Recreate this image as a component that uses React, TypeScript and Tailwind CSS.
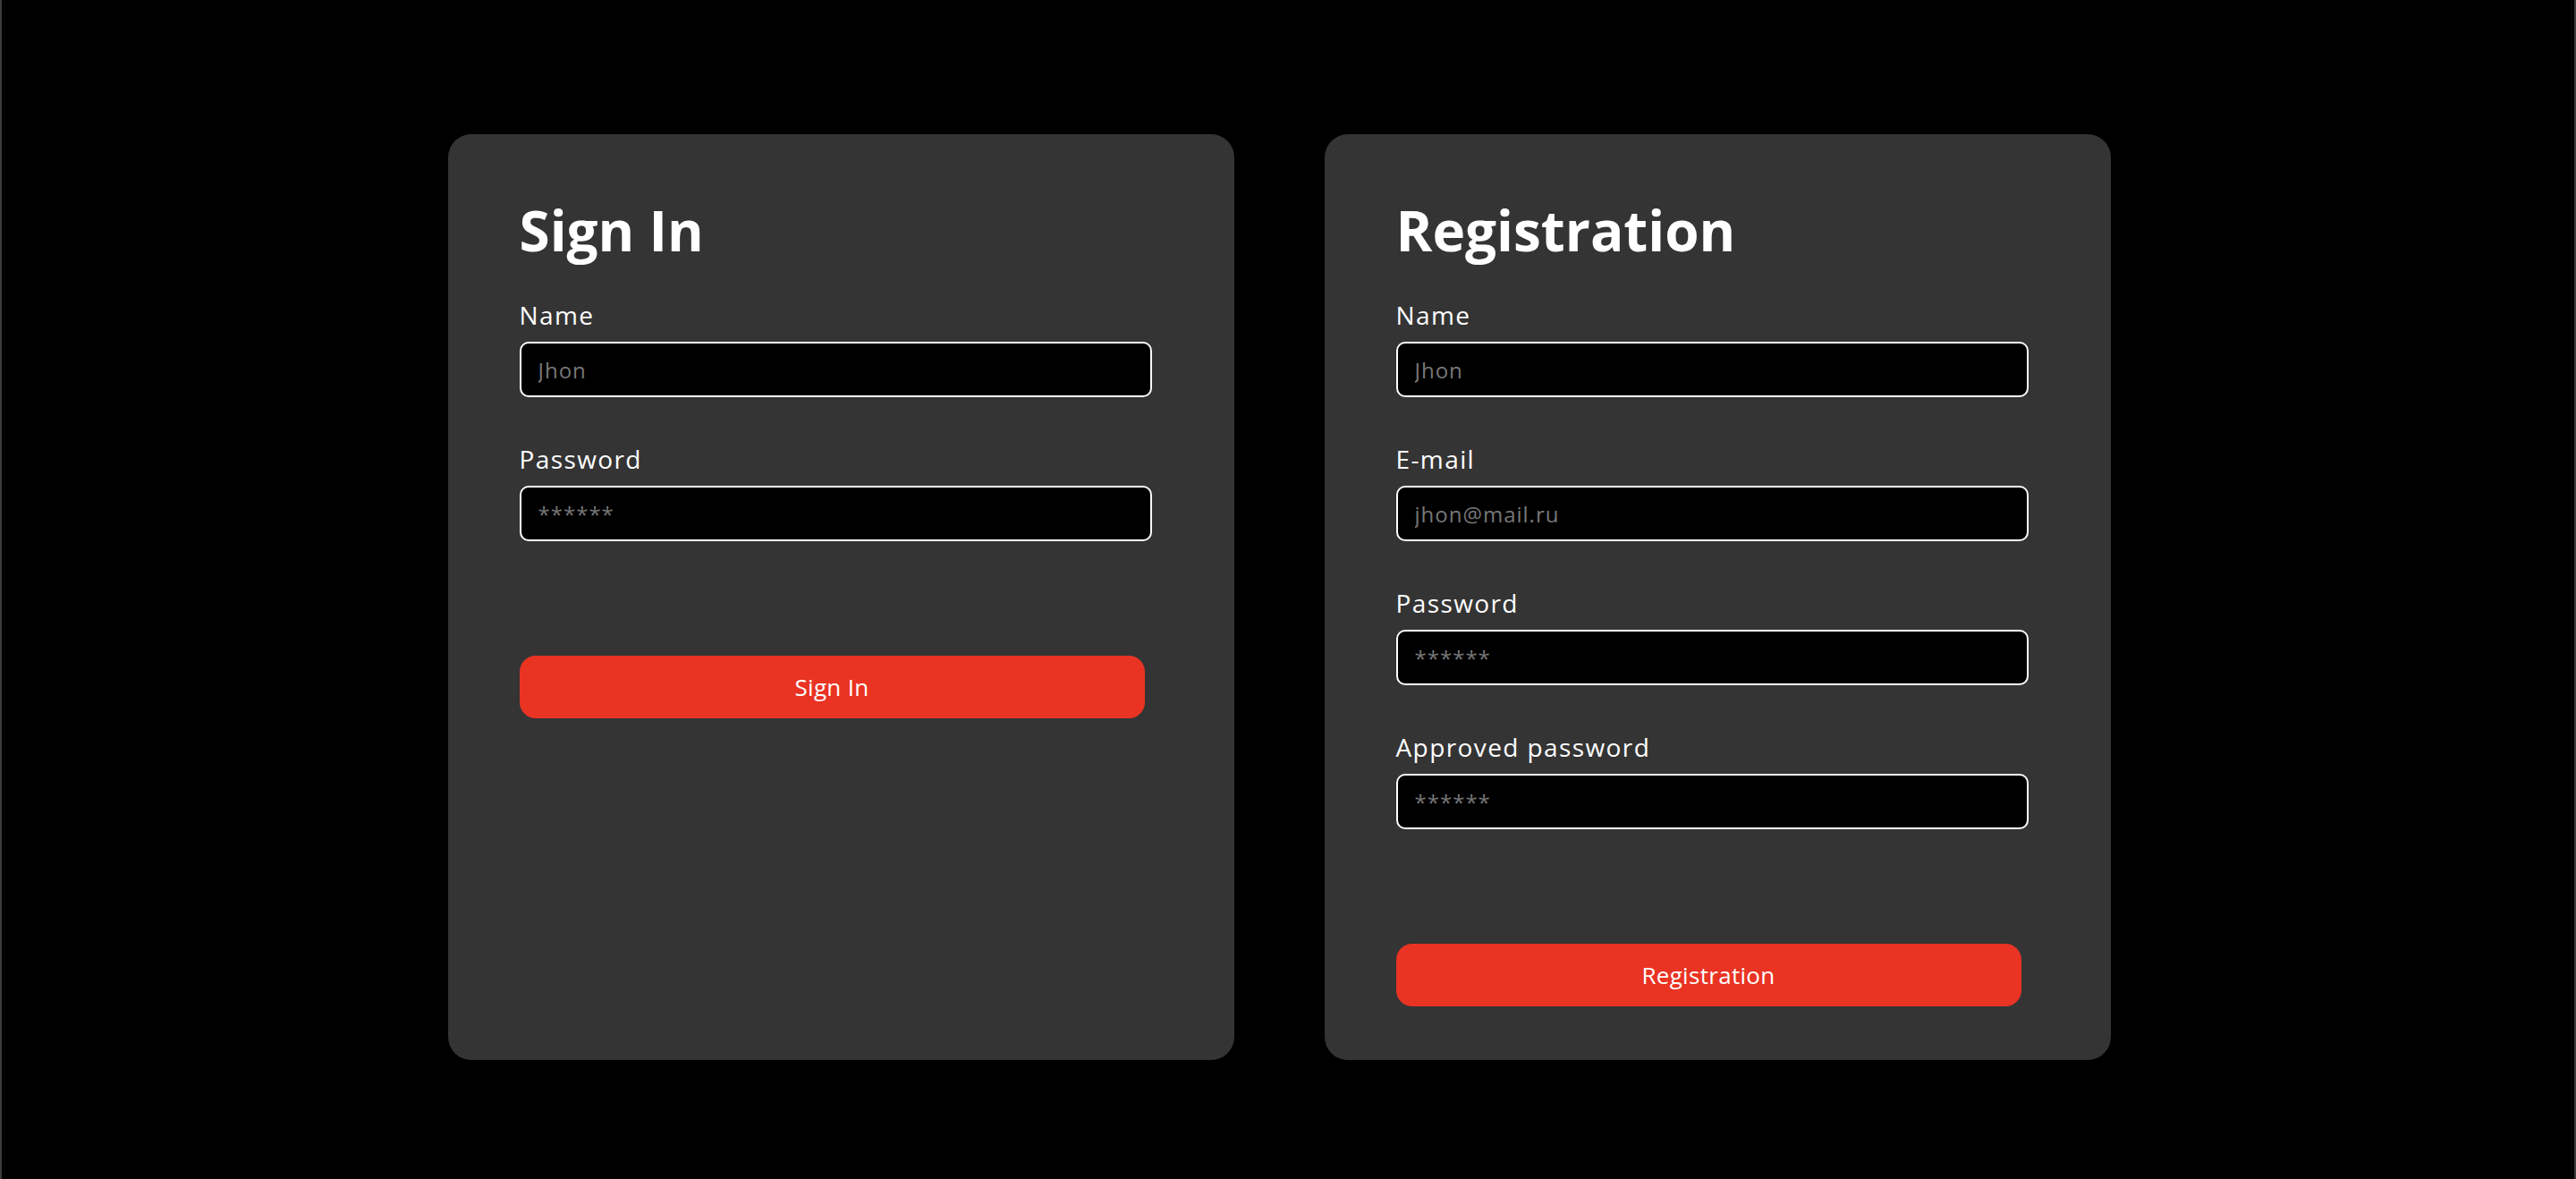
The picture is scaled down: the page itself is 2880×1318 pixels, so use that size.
import React, { useState } from 'react';

interface FieldProps {
    label: string;
    type: string;
    placeholder: string;
    value: string;
    onChange: (v: string) => void;
}

const Field: React.FC<FieldProps> = ({ label, type, placeholder, value, onChange }) => (
    <div className="flex flex-col">
        <label className="text-[28px] leading-8 font-medium tracking-[1.4px] text-white mb-[14px]">{label}</label>
        <input
            type={type}
            placeholder={placeholder}
            value={value}
            onChange={e => onChange(e.target.value)}
            className="w-[707px] h-[62px] bg-black border-2 border-white rounded-[10px] pl-[19px] text-[24px] tracking-[1px] text-white placeholder:text-[#777777] outline-none"
        />
    </div>
);

const SignInCard: React.FC = () => {
    const [name, setName] = useState('');
    const [password, setPassword] = useState('');

    return (
        <form onSubmit={e => e.preventDefault()} className="w-[879px] bg-[#343434] rounded-[26px] pt-[75px] px-[80px] pb-[60px] flex flex-col">
            <h2 className="text-[62px] leading-[64px] font-bold text-white mb-[47px]">Sign In</h2>
            <div className="flex flex-col gap-[53px]">
                <Field label="Name" type="text" placeholder="Jhon" value={name} onChange={setName} />
                <Field label="Password" type="password" placeholder="******" value={password} onChange={setPassword} />
            </div>
            <button type="submit" className="mt-[128px] w-[699px] h-[70px] bg-[#E93323] rounded-[18px] text-white text-[26px] font-medium tracking-[0.3px]">
                Sign In
            </button>
        </form>
    );
};

const RegistrationCard: React.FC = () => {
    const [name, setName] = useState('');
    const [email, setEmail] = useState('');
    const [password, setPassword] = useState('');
    const [approved, setApproved] = useState('');

    return (
        <form onSubmit={e => e.preventDefault()} className="w-[879px] bg-[#343434] rounded-[26px] pt-[75px] px-[80px] pb-[60px] flex flex-col">
            <h2 className="text-[62px] leading-[64px] font-bold text-white mb-[47px]">Registration</h2>
            <div className="flex flex-col gap-[53px]">
                <Field label="Name" type="text" placeholder="Jhon" value={name} onChange={setName} />
                <Field label="E-mail" type="email" placeholder="jhon@mail.ru" value={email} onChange={setEmail} />
                <Field label="Password" type="password" placeholder="******" value={password} onChange={setPassword} />
                <Field label="Approved password" type="password" placeholder="******" value={approved} onChange={setApproved} />
            </div>
            <button type="submit" className="mt-[128px] w-[699px] h-[70px] bg-[#E93323] rounded-[18px] text-white text-[26px] font-medium tracking-[0.3px]">
                Registration
            </button>
        </form>
    );
};

export default function App() {
    return (
        <div className="w-full h-[1318px] bg-black border-x-2 border-[#3c3c3c] font-['Open_Sans',sans-serif] flex justify-center pt-[150px] pr-[20px]">
            <div className="flex items-stretch gap-[101px] self-start">
                <SignInCard />
                <RegistrationCard />
            </div>
        </div>
    );
}
